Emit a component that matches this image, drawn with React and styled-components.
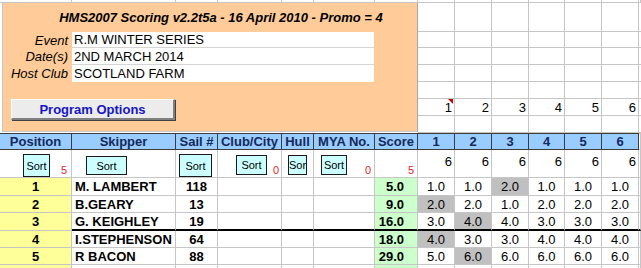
import React from 'react';
import styled, { createGlobalStyle } from 'styled-components';

const GRID = '#c6c6c6';
const DARK = '#3c3c3c';

const Global = createGlobalStyle`
  html, body { margin: 0; padding: 0; background: #fff; }
  body { font-family: "Liberation Sans", Arial, sans-serif; color: #000; }
`;

const Sheet = styled.div`
  width: 641px;
  height: 268px;
  overflow: hidden;
  display: grid;
  grid-template-columns: 72px 104px 42px 64px 32px 61px 43px 37px 37px 37px 36px 37px 37px 2px;
  grid-template-rows: 3px 29px 16px 17px 17px 17px 17px 17px 17px 28px 18px 17px 18px 17px 17px 17px;
  font-family: "Liberation Sans", Arial, sans-serif;
`;

const Cell = styled.div`
  box-sizing: border-box;
  position: relative;
  border-right: 1px solid ${GRID};
  border-bottom: ${p => (p.$thick ? '2px solid #000' : `1px solid ${GRID}`)};
  background: ${p => p.$bg || '#fff'};
  display: flex;
  align-items: center;
  justify-content: ${p => (p.$align === 'left' ? 'flex-start' : p.$align === 'right' ? 'flex-end' : 'center')};
  padding: 0 ${p => p.$pr || 0}px ${p => p.$pb || 0}px ${p => p.$pl || 0}px;
  font-size: 13px;
  font-weight: ${p => (p.$bold ? 700 : 400)};
  white-space: nowrap;
  overflow: hidden;
  min-width: 0;
`;

const Panel = styled.div`
  grid-column: 1 / 8;
  grid-row: 2 / 9;
  box-sizing: border-box;
  margin-left: 2px;
  border-left: 1px solid ${GRID};
  border-right: 1px solid #a8a8a8;
  border-bottom: 1px solid ${GRID};
  margin-bottom: 1px;
  background: #ffcc99;
  display: grid;
  grid-template-columns: 69px 302px 1fr;
  grid-template-rows: 29px 16px 17px 17px 17px 21px 1fr;
`;

const Title = styled.div`
  grid-column: 1 / -1;
  display: flex;
  align-items: center;
  justify-content: center;
  font-size: 13px;
  font-weight: 700;
  font-style: italic;
  padding-left: 22px;
`;

const Label = styled.div`
  grid-column: 1;
  display: flex;
  align-items: center;
  justify-content: flex-end;
  padding-right: 4px;
  font-size: 13px;
  font-style: italic;
  white-space: nowrap;
`;

const Value = styled.div`
  grid-column: 2;
  box-sizing: border-box;
  background: #fff;
  border-bottom: ${p => (p.$last ? 'none' : '1px solid #d4d4d4')};
  display: flex;
  align-items: center;
  padding-left: 2px;
  font-size: 13px;
  white-space: nowrap;
`;

const OptionsButton = styled.div`
  grid-column: 1 / -1;
  grid-row: 6;
  box-sizing: border-box;
  margin-left: 8px;
  width: 164px;
  height: 21px;
  background: #ececec;
  border-top: 1px solid #fff;
  border-left: 1px solid #fff;
  border-right: 2px solid #808080;
  border-bottom: 2px solid #808080;
  box-shadow: 1px 1px 0 #404040;
  display: flex;
  align-items: center;
  justify-content: center;
  color: #1616c4;
  font-size: 13px;
  font-weight: 700;
`;

const Header = styled.div`
  box-sizing: border-box;
  background: ${p => (p.$blank ? '#fff' : '#99ccff')};
  border-top: 1px solid ${p => (p.$blank ? GRID : DARK)};
  border-right: 1px solid ${p => (p.$blank ? GRID : DARK)};
  border-bottom: 1px solid ${p => (p.$blank ? GRID : DARK)};
  display: flex;
  align-items: center;
  justify-content: center;
  color: #15295a;
  font-size: 13px;
  font-weight: 700;
  white-space: nowrap;
  overflow: hidden;
`;

const SortCell = styled.div`
  box-sizing: border-box;
  border-right: 1px solid ${GRID};
  border-bottom: 1px solid ${GRID};
  background: #fff;
  display: flex;
  align-items: flex-start;
  padding-right: ${p => p.$pr || 0}px;
  overflow: hidden;
`;

const SortButton = styled.div`
  box-sizing: border-box;
  flex: none;
  margin-left: ${p => p.$x}px;
  margin-top: ${p => p.$y}px;
  width: ${p => p.$w}px;
  height: ${p => p.$h}px;
  background: #ccffff;
  border: 1px solid #1a1a1a;
  display: flex;
  align-items: center;
  justify-content: center;
  font-size: 11px;
  overflow: hidden;
  white-space: nowrap;
`;

const Count = styled.span`
  margin-left: auto;
  align-self: flex-end;
  margin-bottom: 1px;
  color: #e8262a;
  font-size: 11px;
  line-height: 11px;
`;

const Marker = styled.span`
  position: absolute;
  top: 0;
  right: 1px;
  width: 0;
  height: 0;
  border-top: 5px solid #d40000;
  border-left: 5px solid transparent;
`;

const races = 6;
const rows = [
  { pos: 1, name: 'M. LAMBERT', sail: '118', score: '5.0', r: ['1.0', '1.0', '2.0', '1.0', '1.0', '1.0'], drop: 2 },
  { pos: 2, name: 'B.GEARY', sail: '13', score: '9.0', r: ['2.0', '2.0', '1.0', '2.0', '2.0', '2.0'], drop: 0 },
  { pos: 3, name: 'G. KEIGHLEY', sail: '19', score: '16.0', r: ['3.0', '4.0', '4.0', '3.0', '3.0', '3.0'], drop: 1 },
  { pos: 4, name: 'I.STEPHENSON', sail: '64', score: '18.0', r: ['4.0', '3.0', '3.0', '4.0', '4.0', '4.0'], drop: 0 },
  { pos: 5, name: 'R BACON', sail: '88', score: '29.0', r: ['5.0', '6.0', '6.0', '6.0', '6.0', '6.0'], drop: 1 },
  { pos: '', name: '', sail: '', score: '', r: ['', '', '', '', '', ''], drop: -1 },
];

const headers = ['Position', 'Skipper', 'Sail #', 'Club/City', 'Hull', 'MYA No.', 'Score', '1', '2', '3', '4', '5', '6'];

export default function App() {
  const top = Array.from({ length: 14 }, (_, i) => <Cell key={`t${i}`} />);
  const right = [];
  for (let r = 0; r < 7; r++) {
    for (let c = 0; c < 7; c++) {
      const isNum = r === 5 && c < 6;
      right.push(
        <Cell key={`r${r}-${c}`} $align="right" $pr={2}>
          {isNum ? c + 1 : null}
          {isNum && c === 0 ? <Marker /> : null}
        </Cell>
      );
    }
  }

  return (
    <>
      <Global />
      <Sheet>
        {top}
        <Panel>
          <Title>HMS2007 Scoring v2.2t5a - 16 April 2010 - Promo = 4</Title>
          <Label>Event</Label>
          <Value>R.M WINTER SERIES</Value>
          <Label>Date(s)</Label>
          <Value>2ND MARCH 2014</Value>
          <Label>Host Club</Label>
          <Value $last>SCOTLAND FARM</Value>
          <OptionsButton>Program Options</OptionsButton>
        </Panel>
        {right}

        {headers.map(h => (
          <Header key={`h${h}`}>{h}</Header>
        ))}
        <Header $blank />

        <SortCell $pr={4}>
          <SortButton $x={23} $y={4} $w={27} $h={23}>Sort</SortButton>
          <Count>5</Count>
        </SortCell>
        <SortCell>
          <SortButton $x={14} $y={6} $w={41} $h={19}>Sort</SortButton>
        </SortCell>
        <SortCell>
          <SortButton $x={3} $y={4} $w={33} $h={23}>Sort</SortButton>
        </SortCell>
        <SortCell $pr={2}>
          <SortButton $x={18} $y={5} $w={31} $h={20}>Sort</SortButton>
          <Count>0</Count>
        </SortCell>
        <SortCell>
          <SortButton $x={6} $y={5} $w={19} $h={20}>Sor</SortButton>
        </SortCell>
        <SortCell $pr={3}>
          <SortButton $x={7} $y={5} $w={26} $h={20}>Sort</SortButton>
          <Count>0</Count>
        </SortCell>
        <SortCell $pr={3}>
          <Count>5</Count>
        </SortCell>
        {Array.from({ length: races }, (_, i) => (
          <Cell key={`s${i}`} $align="right" $pr={2} $pb={5}>6</Cell>
        ))}
        <Cell />

        {rows.map((row, ri) => {
          const thick = ri === 2;
          return (
            <React.Fragment key={`d${ri}`}>
              <Cell $bg="#ffff99" $bold>{row.pos}</Cell>
              <Cell $align="left" $pl={3} $bold $thick={thick}>{row.name}</Cell>
              <Cell $bold $thick={thick}>{row.sail}</Cell>
              <Cell $thick={thick} />
              <Cell $thick={thick} />
              <Cell $thick={thick} />
              <Cell $bg="#ccffcc" $align="right" $pr={13} $bold $thick={thick}>{row.score}</Cell>
              {row.r.map((v, ci) => (
                <Cell key={ci} $bg={ci === row.drop ? '#c0c0c0' : undefined} $thick={thick}>{v}</Cell>
              ))}
              <Cell $thick={thick} />
            </React.Fragment>
          );
        })}
      </Sheet>
    </>
  );
}
